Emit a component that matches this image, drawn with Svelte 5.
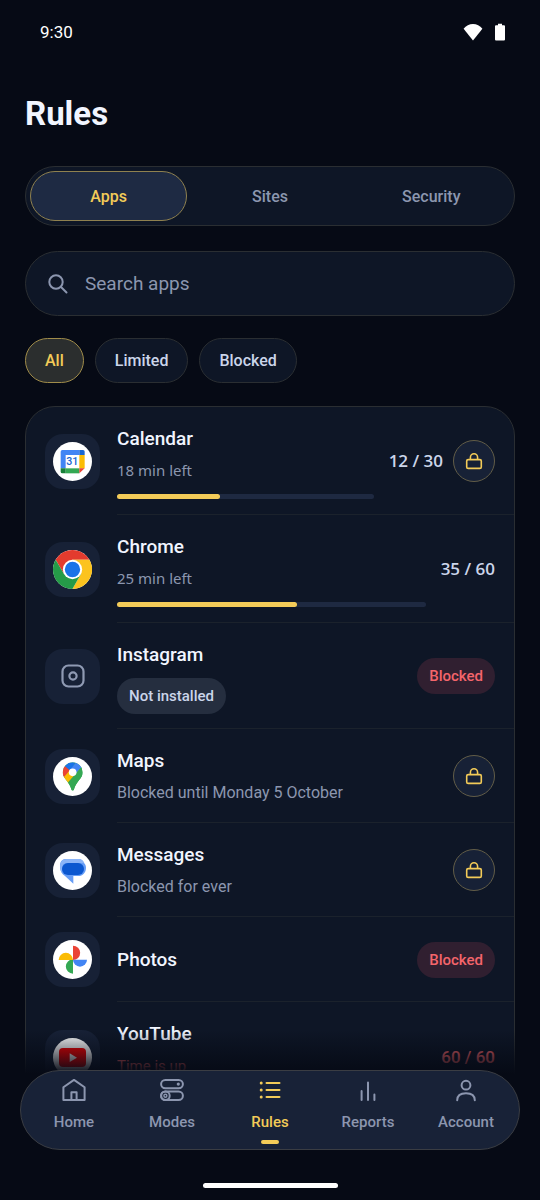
<script lang="ts">
  type Rule = {
    id: string;
    name: string;
    note?: string;
    overdue?: boolean;
    used?: number;
    limit?: number;
    locked?: boolean;
    blocked?: boolean;
    missing?: boolean;
  };

  const TABS = ['Apps', 'Sites', 'Security'];
  const FILTERS = ['All', 'Limited', 'Blocked'];
  const NAV = ['Home', 'Modes', 'Rules', 'Reports', 'Account'];

  const RULES: Rule[] = [
    { id: 'calendar', name: 'Calendar', note: '18 min left', used: 12, limit: 30, locked: true },
    { id: 'chrome', name: 'Chrome', note: '25 min left', used: 35, limit: 60 },
    { id: 'instagram', name: 'Instagram', missing: true, blocked: true },
    { id: 'maps', name: 'Maps', note: 'Blocked until Monday 5 October', locked: true },
    { id: 'messages', name: 'Messages', note: 'Blocked for ever', locked: true },
    { id: 'photos', name: 'Photos', blocked: true },
    { id: 'youtube', name: 'YouTube', note: 'Time is up', overdue: true, used: 60, limit: 60 },
  ];

  let tab = $state('Apps');
  let filter = $state('All');
  let query = $state('');
  let page = $state('Rules');

  let visible = $derived(
    RULES.filter((r) => {
      if (!r.name.toLowerCase().includes(query.trim().toLowerCase())) return false;
      if (filter === 'Limited') return r.limit !== undefined;
      if (filter === 'Blocked') return r.limit === undefined;
      return true;
    })
  );
</script>

{#snippet appIcon(id: string)}
  {#if id === 'instagram'}
    <svg class="glyph" viewBox="0 0 24 24" fill="none" stroke="#8f9ab3" stroke-width="2.2" aria-hidden="true">
      <rect x="1.5" y="1.5" width="21" height="21" rx="6"></rect>
      <circle cx="12" cy="12" r="3.6"></circle>
    </svg>
  {:else}
    <svg class="logo" viewBox="0 0 117 117" aria-hidden="true">
      <circle cx="58.5" cy="58.5" r="58.5" fill="#fff"></circle>
      {#if id === 'calendar'}
        <path d="M28 24h51v15H38v40H23V29a5 5 0 0 1 5-5z" fill="#4285f4"></path>
        <path d="M79 24h11a5 5 0 0 1 5 5v10H79z" fill="#1967d2"></path>
        <path d="M79 39h16v40H79z" fill="#fbbc04"></path>
        <path d="M38 79h41v15H38z" fill="#34a853"></path>
        <path d="M23 79h15v15H28a5 5 0 0 1-5-5z" fill="#188038"></path>
        <path d="M79 79h16L79 94z" fill="#ea4335"></path>
        <text x="58" y="68" text-anchor="middle" class="day">31</text>
      {:else if id === 'chrome'}
        <g transform="translate(58.5 58.5)">
          <path d="M-50.5-29.5A58.5 58.5 0 0 1 50.8-29H0L-25 14.5z" fill="#e33b2e"></path>
          <path d="M50.8-29A58.5 58.5 0 0 1-.3 58.5L25 14.5 0-29z" fill="#fcc31e"></path>
          <path d="M-.3 58.5A58.5 58.5 0 0 1-50.5-29.5L-25 14.5H25z" fill="#259b48"></path>
          <circle r="29" fill="#fff"></circle>
          <circle r="23" fill="#1a73e8"></circle>
        </g>
      {:else if id === 'maps'}
        <clipPath id="pin">
          <path d="M59 16a30 30 0 0 1 30 30c0 12-7 19-15 29-6 8-9 14-11 22-1 5-7 5-8 0-2-8-5-14-11-22-8-10-15-17-15-29a30 30 0 0 1 30-30z"></path>
        </clipPath>
        <g clip-path="url(#pin)">
          <path d="M20 10h80v100H20z" fill="#34a853"></path>
          <path d="M35 28L50 10h20L52 46z" fill="#1a73e8"></path>
          <path d="M35 27l17 14-21 25H20V27z" fill="#ea4335"></path>
          <path d="M51 39L28 66l15 17 41-46-20 4z" fill="#fbbc04"></path>
          <path d="M86 31L66 53 50 40 71 14l15 5z" fill="#4285f4"></path>
          <path d="M86 29L40 82l20 30h40V20z" fill="#34a853"></path>
        </g>
        <circle cx="59" cy="46" r="11.5" fill="#fff"></circle>
      {:else if id === 'messages'}
        <path d="M39 24h38c7 0 12 4 15 11 5 4 7 9 7 15 0 15-10 25-23 25H61v23L36 75C26 69 21 58 21 44c0-12 7-20 18-20z" fill="#669df6"></path>
        <path d="M39 24h38c8 0 14 4 17 12H42c-8 0-14 5-15 14v15c-4-5-6-11-6-18 0-13 7-23 18-23z" fill="#8ab4f8"></path>
        <rect x="27" y="36" width="66" height="36" rx="18" fill="#0b57d0"></rect>
      {:else if id === 'photos'}
        <path d="M60 17a21.5 21.5 0 0 1 0 43z" fill="#ea4335"></path>
        <path d="M102 59a21 21 0 0 1-42 0z" fill="#4285f4"></path>
        <path d="M60 101a21.5 21.5 0 0 1 0-43z" fill="#34a853"></path>
        <path d="M17 60a21.5 21.5 0 0 1 43 0z" fill="#fbbc04"></path>
      {:else if id === 'youtube'}
        <rect x="18" y="30" width="81" height="57" rx="12" fill="#f00"></rect>
        <path d="M50 46l22 13-22 13z" fill="#fff"></path>
      {/if}
    </svg>
  {/if}
{/snippet}

{#snippet navIcon(name: string)}
  <svg
    class="nav-icon"
    viewBox="0 0 24 24"
    fill="none"
    stroke="currentColor"
    stroke-width="2"
    stroke-linecap="round"
    stroke-linejoin="round"
    aria-hidden="true"
  >
    {#if name === 'Home'}
      <path d="M1.4 9.3L12 1.9l10.6 7.4V22H1.4z"></path>
      <path d="M9.4 22v-7.8h5.2V22"></path>
    {:else if name === 'Modes'}
      <rect x="1.1" y="1.9" width="21.8" height="8.4" rx="4.2"></rect>
      <circle cx="18.3" cy="6.1" r="1.6" fill="currentColor" stroke="none"></circle>
      <rect x="1.1" y="13.5" width="21.8" height="8.6" rx="4.3"></rect>
      <circle cx="5.4" cy="17.8" r="4.3"></circle>
      <circle cx="5.4" cy="17.8" r="1.5" stroke-width="1.4"></circle>
    {:else if name === 'Rules'}
      <path d="M8.5 5h13M8.5 12h13M8.5 19h13"></path>
      <path d="M3.2 5h.01M3.2 12h.01M3.2 19h.01" stroke-width="3"></path>
    {:else if name === 'Reports'}
      <path d="M5.6 13v9M12 4.6V22M18.4 16.4V22"></path>
    {:else}
      <circle cx="12" cy="7.2" r="4.4"></circle>
      <path d="M3.2 22.2c0-4.6 3.6-7 8.8-7s8.8 2.4 8.8 7"></path>
    {/if}
  </svg>
{/snippet}

<div class="shell">
  <header class="status">
    <span>9:30</span>
    <div class="status-icons">
      <svg width="20" height="18" viewBox="0 0 20 18" fill="#fff" aria-hidden="true">
        <path d="M10 17.4L.6 5.7C3 2.6 6.3 1 10 1s7 1.6 9.4 4.7z"></path>
      </svg>
      <svg width="10" height="18" viewBox="0 0 10 18" fill="#fff" aria-hidden="true">
        <path d="M3 .8h4v1.5h2a1 1 0 0 1 1 1v13.2a1 1 0 0 1-1 1H1a1 1 0 0 1-1-1V3.3a1 1 0 0 1 1-1h2z"></path>
      </svg>
    </div>
  </header>

  <main>
    <h1>Rules</h1>

    <div class="tabs" role="tablist">
      {#each TABS as t}
        <button type="button" role="tab" aria-selected={tab === t} class:active={tab === t} onclick={() => (tab = t)}>
          {t}
        </button>
      {/each}
    </div>

    <label class="search">
      <svg viewBox="0 0 20 20" fill="none" stroke="currentColor" stroke-width="2" stroke-linecap="round" aria-hidden="true">
        <circle cx="8" cy="8" r="6.7"></circle>
        <path d="M13 13l5.5 5.5"></path>
      </svg>
      <input type="text" placeholder="Search apps" aria-label="Search apps" bind:value={query} />
    </label>

    <div class="chips">
      {#each FILTERS as f}
        <button type="button" aria-pressed={filter === f} class:active={filter === f} onclick={() => (filter = f)}>
          {f}
        </button>
      {/each}
    </div>

    <ul class="rules">
      {#each visible as rule (rule.id)}
        <li>
          <div class="tile">{@render appIcon(rule.id)}</div>
          <div class="row">
            <div class="info">
              <h2>{rule.name}</h2>
              {#if rule.note}
                <p class:overdue={rule.overdue} class:quota={rule.limit}>{rule.note}</p>
              {/if}
              {#if rule.missing}
                <span class="pill">Not installed</span>
              {/if}
              {#if rule.limit}
                <div class="track">
                  <div class="fill" class:overdue={rule.overdue} style:width="{(rule.used! / rule.limit) * 100}%"></div>
                </div>
              {/if}
            </div>
            {#if rule.limit}
              <span class="count" class:overdue={rule.overdue}>{rule.used} / {rule.limit}</span>
            {/if}
            {#if rule.locked}
              <button type="button" class="lock" aria-label="Unlock {rule.name}">
                <svg viewBox="0 0 18 18" fill="none" stroke="currentColor" stroke-width="1.6" aria-hidden="true">
                  <rect x="1.7" y="7.6" width="14.6" height="8.8" rx="1.5"></rect>
                  <path d="M5.4 7.6V5.400a3.600 3.600 0 0 1 7.200 0v2.200"></path>
                </svg>
              </button>
            {/if}
            {#if rule.blocked}
              <span class="pill danger">Blocked</span>
            {/if}
          </div>
        </li>
      {/each}
    </ul>
  </main>

  <div class="dock">
    <nav>
      {#each NAV as item}
        <a
          href="#{item.toLowerCase()}"
          class:current={page === item}
          aria-current={page === item ? 'page' : undefined}
          onclick={() => (page = item)}
        >
          {@render navIcon(item)}
          <span>{item}</span>
          <i></i>
        </a>
      {/each}
    </nav>
    <div class="handle"></div>
  </div>
</div>

<style>
  :global(body) {
    background: #060a15;
  }

  .shell {
    --gold: #f3cb58;
    --line: #2a2e32;
    --card: #0e1626;
    --raised: #172136;
    --text: #f1f5ff;
    --soft: #cbd5ea;
    --muted: #8c96af;
    --red: #f4656b;
    position: relative;
    display: flex;
    flex-direction: column;
    height: 100vh;
    overflow: hidden;
    color: var(--text);
    font-family: Roboto, 'Liberation Sans', sans-serif;
  }

  button {
    font: inherit;
    cursor: pointer;
  }

  .status {
    display: flex;
    flex: none;
    align-items: center;
    justify-content: space-between;
    height: 64px;
    padding: 0 35px 0 40px;
    font-size: 17px;
    color: #fff;
  }

  .status-icons {
    display: flex;
    gap: 12px;
  }

  main {
    flex: 1;
    min-height: 0;
    overflow-y: auto;
    scrollbar-width: none;
    padding: 30px 25px 0;
  }

  h1 {
    margin: 0 0 32px;
    font-size: 33px;
    line-height: 40px;
    font-weight: 700;
  }

  .tabs {
    display: flex;
    gap: 4px;
    height: 60px;
    box-sizing: border-box;
    margin-bottom: 25px;
    padding: 4px;
    border: 1px solid var(--line);
    border-radius: 30px;
    background: var(--card);
  }

  .tabs button {
    flex: 1;
    border: 1px solid transparent;
    border-radius: 25px;
    background: none;
    color: var(--muted);
    font-size: 16px;
    font-weight: 500;
  }

  .tabs .active {
    border-color: #8f814f;
    background: #1e2a43;
    color: var(--gold);
  }

  .search {
    display: flex;
    align-items: center;
    gap: 17px;
    height: 65px;
    box-sizing: border-box;
    margin-bottom: 22px;
    padding: 0 22px;
    border: 1px solid var(--line);
    border-radius: 33px;
    background: var(--card);
    color: var(--muted);
  }

  .search svg {
    width: 20px;
    height: 20px;
  }

  .search input {
    flex: 1;
    min-width: 0;
    padding: 0;
    border: 0;
    outline: none;
    background: none;
    color: var(--text);
    font: inherit;
    font-size: 19px;
  }

  .search input::placeholder {
    color: var(--muted);
    opacity: 1;
  }

  .chips {
    display: flex;
    gap: 11px;
    margin-bottom: 23px;
  }

  .chips button {
    height: 45px;
    padding: 0 19px;
    border: 1px solid var(--line);
    border-radius: 23px;
    background: var(--card);
    color: var(--soft);
    font-size: 16px;
    font-weight: 500;
  }

  .chips .active {
    border-color: #a08c4a;
    background: #2b2e2e;
    color: var(--gold);
  }

  .rules {
    margin: 0;
    padding: 0;
    list-style: none;
    border: 1px solid var(--line);
    border-radius: 30px;
    background: var(--card);
  }

  li {
    display: flex;
    align-items: stretch;
    gap: 17px;
    padding-left: 19px;
  }

  .tile {
    display: flex;
    flex: none;
    align-self: center;
    align-items: center;
    justify-content: center;
    width: 55px;
    height: 55px;
    border-radius: 18px;
    background: var(--raised);
  }

  .logo {
    width: 39px;
    height: 39px;
  }

  .glyph {
    width: 24px;
    height: 24px;
  }

  .day {
    fill: #1967d2;
    font-size: 32px;
    font-weight: 500;
  }

  .row {
    display: flex;
    flex: 1;
    min-width: 0;
    min-height: 85px;
    box-sizing: border-box;
    align-items: center;
    gap: 10px;
    padding: 15px 19px 14px 0;
    border-bottom: 1px solid #1b222c;
  }

  .info {
    flex: 1;
    min-width: 0;
    margin-right: 5px;
  }

  h2 {
    margin: 0;
    font-size: 19px;
    line-height: 34px;
    font-weight: 500;
  }

  p {
    margin: 0;
    color: var(--muted);
    font-size: 16px;
    line-height: 30px;
  }

  .quota {
    font-family: 'Noto Sans', Roboto, sans-serif;
    font-size: 15px;
    line-height: 28px;
  }

  .track {
    height: 5px;
    margin: 10px 0 1px;
    border-radius: 3px;
    background: #1e2941;
  }

  .fill {
    height: 100%;
    border-radius: inherit;
    background: var(--gold);
  }

  .count {
    color: var(--soft);
    font-family: 'Open Sans', 'Noto Sans', sans-serif;
    font-size: 17px;
    line-height: 20px;
    font-weight: 600;
  }

  p.overdue,
  .count.overdue {
    color: var(--red);
    font-family: Roboto, sans-serif;
  }

  p.overdue {
    line-height: 30px;
  }

  .count.overdue {
    font-weight: 500;
  }

  .fill.overdue {
    background: var(--red);
  }

  .pill {
    display: block;
    width: fit-content;
    margin-top: 6px;
    padding: 0 12px;
    border-radius: 18px;
    background: #252e3f;
    color: var(--soft);
    font-size: 15px;
    line-height: 36px;
    font-weight: 500;
  }

  .pill.danger {
    margin-top: 0;
    background: #301f30;
    color: var(--red);
  }

  .lock {
    display: flex;
    align-items: center;
    justify-content: center;
    width: 42px;
    height: 42px;
    padding: 0;
    border: 1px solid #625d48;
    border-radius: 50%;
    background: var(--raised);
    color: var(--gold);
  }

  .lock svg {
    width: 18px;
    height: 18px;
  }

  .dock {
    position: absolute;
    right: 0;
    bottom: 0;
    left: 0;
    padding: 40px 20px 12px;
    background: linear-gradient(to bottom, transparent, #060a15 44px);
  }

  nav {
    display: flex;
    height: 80px;
    box-sizing: border-box;
    padding: 0 4px;
    border: 1px solid #3a3d43;
    border-radius: 40px;
    background: #182237;
  }

  nav a {
    display: flex;
    flex: 1;
    flex-direction: column;
    align-items: center;
    padding-top: 7px;
    color: var(--muted);
    font-size: 15px;
    line-height: 20px;
    font-weight: 500;
    text-decoration: none;
  }

  nav span {
    margin: 10px 0 8px;
  }

  nav i {
    width: 18px;
    height: 4px;
    border-radius: 2px;
  }

  nav .current {
    color: var(--gold);
  }

  .current i {
    background: var(--gold);
  }

  .nav-icon {
    width: 24px;
    height: 24px;
  }

  .handle {
    width: 25%;
    min-width: 135px;
    height: 5px;
    margin: 33px auto 0;
    border-radius: 3px;
    background: #fff;
  }
</style>
